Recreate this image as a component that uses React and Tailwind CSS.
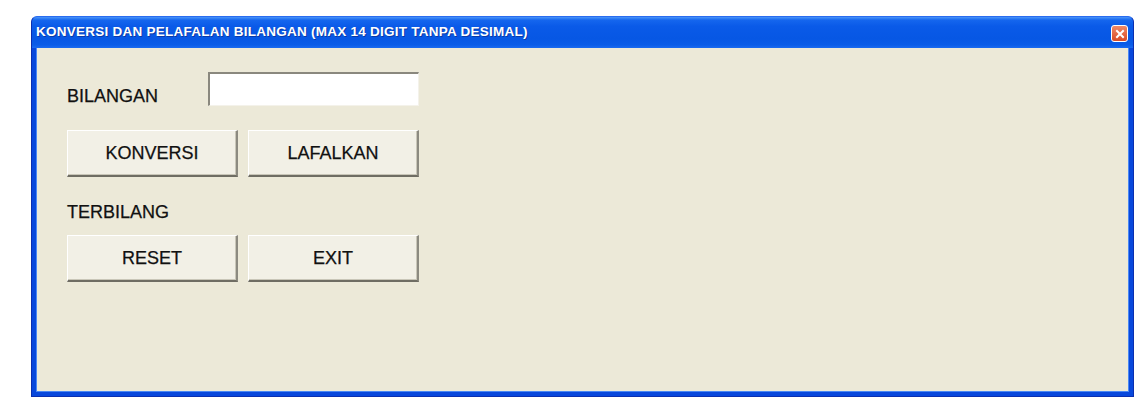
export default function App() {
  const font = { fontFamily: '"Liberation Sans", Arial, sans-serif' };
  const btn =
    "w-[171px] h-[47px] flex items-center justify-center bg-[#f2f0e6] text-[18px] text-[#111] [-webkit-text-stroke:0.25px_#111] border-t border-l border-t-white border-l-white border-b-2 border-r-2 border-b-[#6f6d63] border-r-[#8c8a80] shadow-[inset_-1px_-1px_0_#c9c6b8]";
  const label = "text-[18px] text-[#111] leading-[20px] [-webkit-text-stroke:0.25px_#111]";
  return (
    <div className="w-[1134px] h-[404px] bg-white pl-[31px] pt-[16px]" style={font}>
      <div className="w-[1103px] h-[381px] flex flex-col rounded-t-[6px] bg-[#0848dc] border border-[#0a2fb0] border-t-[#2a6cf0] overflow-hidden">
        {/* title bar */}
        <div className="h-[31px] flex items-center justify-between pl-[4px] pr-[5px] bg-[linear-gradient(to_bottom,#4a94f8_0%,#1566ee_10%,#0a5ae8_30%,#0757e4_70%,#0a5ce8_90%,#1a6af0_100%)]">
          <span className="text-white font-bold text-[13.5px] tracking-[0.25px] [text-shadow:1px_1px_0_#0a3aa8]">
            KONVERSI DAN PELAFALAN BILANGAN (MAX 14 DIGIT TANPA DESIMAL)
          </span>
          <div className="w-[17px] h-[17px] mt-[2px] rounded-[3px] border border-white bg-[linear-gradient(to_bottom,#f08a68,#d84a24)] flex items-center justify-center">
            <svg width="10" height="10" viewBox="0 0 10 10">
              <path d="M2 2 L8 8 M8 2 L2 8" stroke="white" strokeWidth="2" strokeLinecap="square" />
            </svg>
          </div>
        </div>
        {/* client area inside the blue frame */}
        <div className="flex-1 mx-[4px] mb-[4px] bg-[#ece9d8] border-b border-l border-r border-[#4a88f4] pl-[30px] pt-[24px] flex flex-col">
          <div className="flex items-start">
            <span className={`w-[141px] pt-[14px] ${label}`}>BILANGAN</span>
            <div className="w-[211px] h-[34px] bg-white border-t-2 border-l-2 border-t-[#8a887e] border-l-[#8a887e] border-b border-r border-b-[#f4f2ea] border-r-[#f4f2ea]" />
          </div>
          <div className="flex gap-[10px] mt-[24px]">
            <div className={btn}>KONVERSI</div>
            <div className={btn}>LAFALKAN</div>
          </div>
          <span className={`mt-[25px] ${label}`}>TERBILANG</span>
          <div className="flex gap-[10px] mt-[13px]">
            <div className={btn}>RESET</div>
            <div className={btn}>EXIT</div>
          </div>
        </div>
      </div>
    </div>
  );
}
